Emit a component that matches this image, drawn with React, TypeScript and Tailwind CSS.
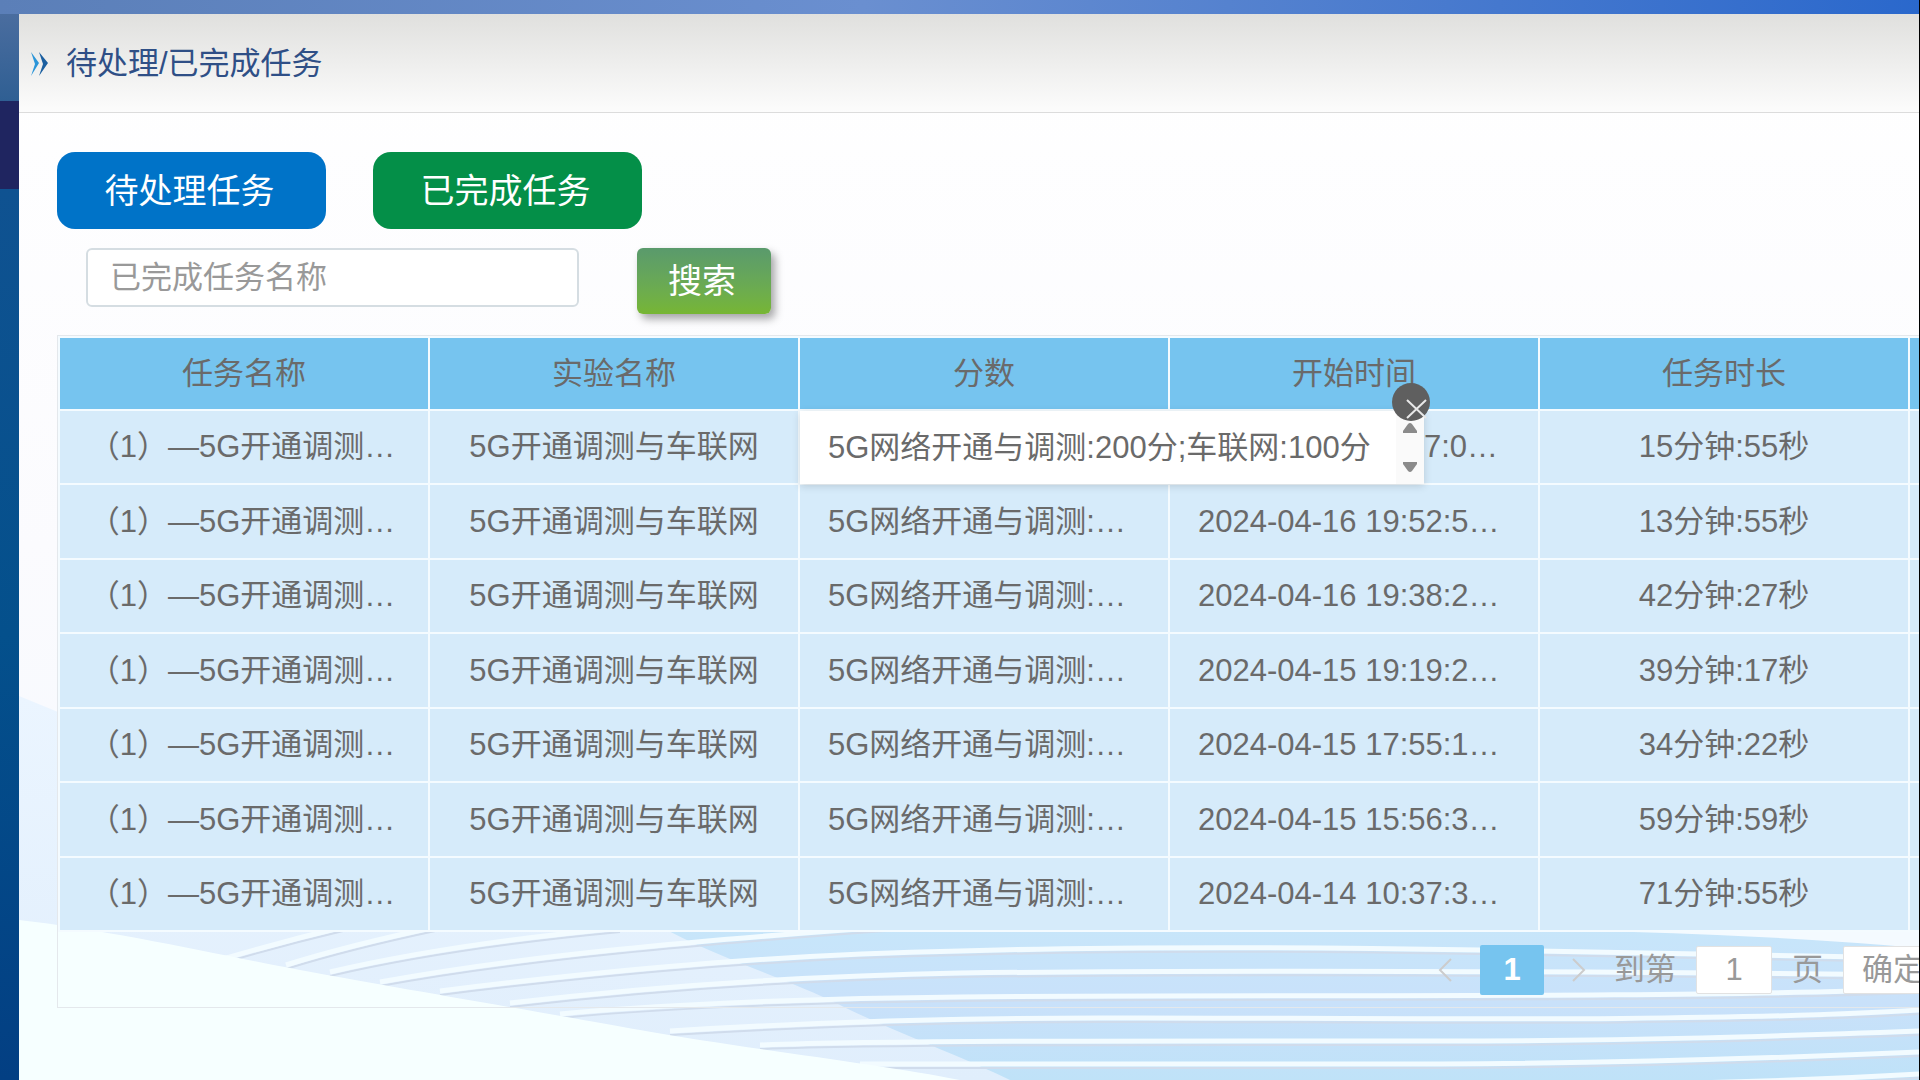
import React, { useState } from 'react';

type Task = {
    id: number;
    name: string;
    experiment: string;
    score: string;
    startTime: string;
    duration: string;
};

const SCORE_DETAIL = '5G网络开通与调测:200分;车联网:100分';

const makeTask = (id: number, startTime: string, duration: string): Task => ({
    id,
    name: '（1）—5G开通调测…',
    experiment: '5G开通调测与车联网',
    score: '5G网络开通与调测:…',
    startTime,
    duration,
});

const tasks: Task[] = [
    makeTask(1, '2024-04-16 20:07:0…', '15分钟:55秒'),
    makeTask(2, '2024-04-16 19:52:5…', '13分钟:55秒'),
    makeTask(3, '2024-04-16 19:38:2…', '42分钟:27秒'),
    makeTask(4, '2024-04-15 19:19:2…', '39分钟:17秒'),
    makeTask(5, '2024-04-15 17:55:1…', '34分钟:22秒'),
    makeTask(6, '2024-04-15 15:56:3…', '59分钟:59秒'),
    makeTask(7, '2024-04-14 10:37:3…', '71分钟:55秒'),
];

const columns = ['任务名称', '实验名称', '分数', '开始时间', '任务时长', ''];

// score and start time are long, they start at the left padding
const cellAlign = ['pr-1 text-center', 'text-center', 'pl-7 text-left', 'pl-7 text-left', 'text-center', 'text-center'];

// white stripes over the blue area, bottom of the content panel
const stripes = [
    'M216 961Q280 942 347 926',
    'M286 965Q350 945 440 926',
    'M330 972Q450 944 620 928',
    'M380 982C520 956 700 940 900 926',
    'M440 991C640 966 800 954 960 951C1100 947 1300 947 1480 950S1800 955 1920 958',
    'M510 1003C640 988 800 976 960 973C1200 970 1600 971 1920 975',
    'M560 1014C640 1006 800 998 960 997C1200 994 1650 999 1920 989',
    'M670 1031C800 1023 960 1018 1100 1018C1300 1017 1700 1024 1920 1010',
    'M760 1045C900 1040 1200 1041 1440 1041C1640 1041 1780 1036 1920 1031',
    'M860 1064C1000 1063 1300 1065 1440 1064C1640 1063 1780 1058 1920 1052',
    'M1500 1086Q1750 1084 1920 1074',
];

// drawn on the 1920x1080 window, panel starts at 19,14
const Backdrop = () => (
    <svg
        className="absolute inset-0 w-full h-full"
        viewBox="19 14 1900 1066"
        preserveAspectRatio="none"
        aria-hidden="true"
    >
        <defs>
            <linearGradient id="sheet" x1="0" y1="0" x2="0" y2="1">
                <stop offset="0" stopColor="#ebf5ff" />
                <stop offset="1" stopColor="#e0eefc" />
            </linearGradient>
            <linearGradient id="sea" x1="0" y1="0" x2="0" y2="1">
                <stop offset="0" stopColor="#c7e6fa" />
                <stop offset="0.5" stopColor="#c9e1fa" />
                <stop offset="1" stopColor="#bfe2f8" />
            </linearGradient>
        </defs>
        <path d="M19 696L58 712L1920 800V1080H19Z" fill="url(#sheet)" />
        <path d="M660 926C710 955 790 980 840 1005S970 1060 1010 1080H1920V926Z" fill="url(#sea)" />
        <g fill="none" strokeWidth="2" stroke="#d0dcec" transform="translate(0 4)">
            {stripes.map((d) => (
                <path key={d} d={d} />
            ))}
        </g>
        <g fill="none" strokeWidth="5" stroke="#f2fbff">
            {stripes.map((d) => (
                <path key={d} d={d} />
            ))}
        </g>
        <path d="M1560 930Q1760 934 1920 948V930Z" fill="#f4faff" />
        <path d="M19 920C110 930 220 955 300 970S540 1012 640 1030S880 1064 960 1080H19Z" fill="#f6ffff" />
    </svg>
);

const ScoreTip = ({ onClose }: { onClose: () => void }) => (
    <div className="absolute z-10 top-0 left-0 flex w-[624px] h-[73px] bg-white shadow-[0_2px_8px_rgba(0,0,0,0.15)]">
        <div className="flex-1 flex items-center pl-7 whitespace-nowrap">{SCORE_DETAIL}</div>
        <div className="flex flex-col items-center justify-between w-7 py-3 bg-[#fafafa]">
            <svg width="14" height="10" viewBox="0 0 14 10"><path d="M5 1Q7 -1 9 1L14 8V10H0V8Z" fill="#8b8b8b" /></svg>
            <svg width="14" height="10" viewBox="0 0 14 10"><path d="M5 9Q7 11 9 9L14 2V0H0V2Z" fill="#8b8b8b" /></svg>
        </div>
        <button
            className="absolute -top-7 -right-1.5 w-[38px] h-[38px] rounded-full bg-[#5f5f5f]"
            aria-label="关闭"
            onClick={onClose}
        >
            <svg width="38" height="38" viewBox="0 0 38 38">
                <path d="M15 17L34 35M34 17L15 35" stroke="#e8e8e8" strokeWidth="2" />
            </svg>
        </button>
    </div>
);

const TaskTable = () => {
    const [tipId, setTipId] = useState<number | null>(1);

    return (
        <table className="table-fixed w-[2222px] border-separate border-spacing-0 border-t-2 border-l-2 border-[#f4fbff] text-[#6a6a6a]">
            <thead>
                <tr className="h-[73px]">
                    {columns.map((label, i) => (
                        <th key={i} className="p-0 bg-[#76c4ef] border-r-2 border-b-2 border-[#f4fbff] font-normal">
                            {label}
                        </th>
                    ))}
                </tr>
            </thead>
            <tbody>
                {tasks.map((task) => (
                    <tr key={task.id} className="h-[74px] even:h-[75px]">
                        {[task.name, task.experiment, task.score, task.startTime, task.duration, ''].map((text, i) => (
                            <td
                                key={i}
                                className={`relative py-0 bg-[#d6ebfa] border-r-2 border-b-2 border-[#f4fbff] whitespace-nowrap ${cellAlign[i]}`}
                                onClick={() => i === 2 && setTipId(task.id)}
                            >
                                {/* the tip shows the full score in place of the short one */}
                                {i === 2 && tipId === task.id
                                    ? <ScoreTip onClose={() => setTipId(null)} />
                                    : i === 3 && tipId === task.id
                                        ? <div className="pl-[226px]">{text.slice(-4)}</div>
                                        : text}
                            </td>
                        ))}
                    </tr>
                ))}
            </tbody>
        </table>
    );
};

const Pager = () => (
    <div className="flex items-center justify-end h-[75px] -mr-6 text-[#999]">
        <button aria-label="上一页">
            <svg width="14" height="24" viewBox="0 0 14 24"><path d="M13 1L2 12L13 23" fill="none" stroke="#cccccc" strokeWidth="2" /></svg>
        </button>
        <button className="ml-7 w-16 h-[50px] rounded-xs bg-[#76c4ef] text-white font-bold">1</button>
        <button className="ml-7" aria-label="下一页">
            <svg width="14" height="24" viewBox="0 0 14 24"><path d="M1 1L12 12L1 23" fill="none" stroke="#cccccc" strokeWidth="2" /></svg>
        </button>
        <label htmlFor="page" className="ml-7">到第</label>
        <input
            id="page"
            defaultValue="1"
            className="ml-5 w-[76px] h-12 rounded-xs border border-[#e2e2e2] bg-white text-center"
        />
        <span className="ml-5">页</span>
        <button className="ml-5 px-[18px] h-12 rounded-xs border border-[#e2e2e2] bg-white whitespace-nowrap">确定</button>
    </div>
);

export default function App() {
    return (
        <div className="min-h-screen flex flex-col overflow-hidden border-r border-black text-[31px] leading-10 font-['Liberation_Sans','Noto_Sans_CJK_SC',sans-serif]">
            <div className="h-3.5 bg-linear-to-r from-[#5b7fb8] via-[#6a8fd0] via-45% to-[#2a68cc]" />
            <div className="flex-1 flex">
                <aside className="w-[19px] shrink-0 flex flex-col">
                    <div className="h-[87px] bg-linear-to-b from-[#4a6d9f] to-[#2f5f93]" />
                    <div className="h-[88px] bg-[#1f2560]" />
                    <div className="flex-1 bg-linear-to-b from-[#0f5291] via-[#04508c] to-[#033f83]" />
                </aside>
                <main className="relative flex-1 min-w-0 overflow-hidden bg-linear-to-b from-white via-[#fbfbfe] to-[#f3f8fe]">
                    <Backdrop />
                    <div className="relative">
                        <header className="flex items-center h-[99px] pl-3 pt-0.5 border-b border-[#dcdcdc] bg-linear-to-b from-[#e0e0de] to-[#fcfcfc]">
                            <svg width="17" height="24" viewBox="0 0 17 24" aria-hidden="true">
                                <path d="M0 0L8 11L0 24L4 12Z" fill="#2b95d8" />
                                <path d="M8 0L17 11L8 24L12 12Z" fill="#1b5fa0" />
                            </svg>
                            <h1 className="ml-[18px] text-[#2f4f86]">待处理/已完成任务</h1>
                        </header>
                        <div className="pl-[38px]">
                            <div className="flex gap-[47px] pt-[39px] text-[34px] text-white">
                                <button className="w-[269px] h-[77px] pr-1 rounded-[18px] bg-[#0073c8]">待处理任务</button>
                                <button className="w-[269px] h-[77px] pr-1 rounded-[18px] bg-[#048f48]">已完成任务</button>
                            </div>
                            <div className="flex items-start pt-[19px] pl-[29px]">
                                <input
                                    className="w-[493px] h-[59px] px-[22px] rounded-md border-2 border-[#d5dde2] bg-white placeholder:text-[#999]"
                                    placeholder="已完成任务名称"
                                    aria-label="已完成任务名称"
                                />
                                <button className="ml-[58px] w-[134px] h-[66px] pr-1 rounded-md bg-linear-to-b from-[#5a9a6c] to-[#77b633] text-[34px] text-white shadow-[4px_5px_8px_rgba(0,0,0,0.35)]">
                                    搜索
                                </button>
                            </div>
                            <div className="mt-[21px] border border-r-0 border-[#e4e8ec]">
                                <TaskTable />
                                <Pager />
                            </div>
                        </div>
                    </div>
                </main>
            </div>
        </div>
    );
}
